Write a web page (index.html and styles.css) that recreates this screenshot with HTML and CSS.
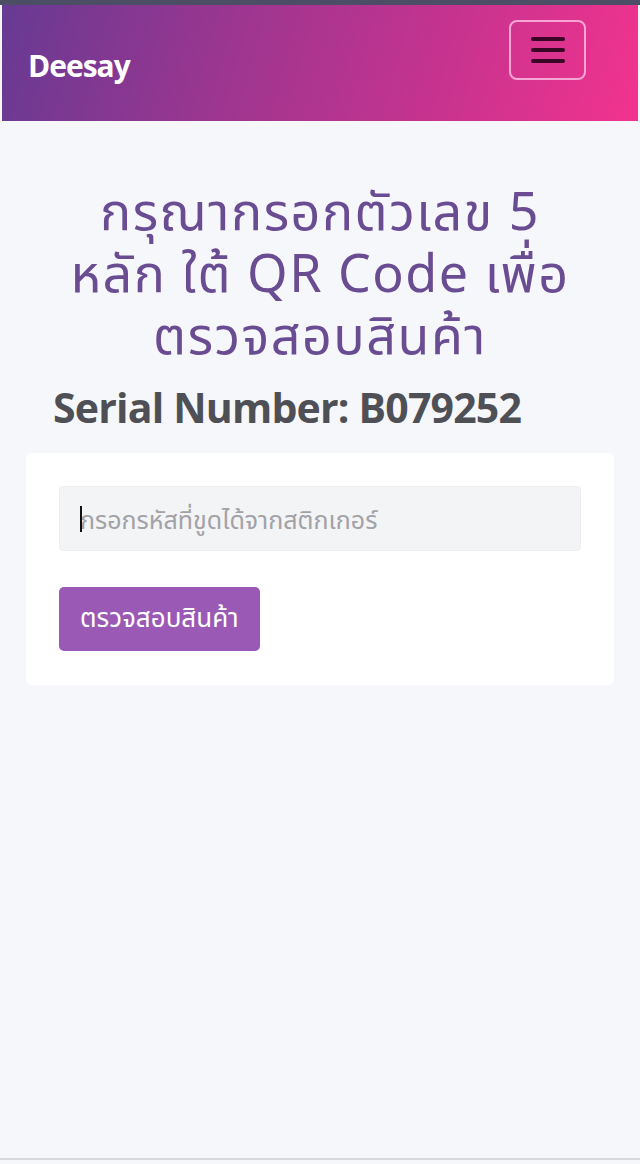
FILE: index.html
```html
<!DOCTYPE html>
<html lang="th">
<head>
<meta charset="utf-8">
<title>Deesay</title>
<link rel="stylesheet" href="styles.css">
</head>
<body>
<div class="topbar"></div>
<nav class="navbar">
  <a class="brand" href="#">Deesay</a>
  <button class="toggler" type="button" aria-label="menu">
    <span class="bar"></span><span class="bar"></span><span class="bar"></span>
  </button>
</nav>
<main class="content">
  <h1 class="title">กรุณากรอกตัวเลข 5<br>หลัก ใต้ QR Code เพื่อ<br>ตรวจสอบสินค้า</h1>
  <h2 class="serial">Serial Number: B079252</h2>
  <div class="card">
    <div class="field"><span class="caret"></span><input class="input" type="text" placeholder="กรอกรหัสที่ขูดได้จากสติกเกอร์"></div>
    <button class="btn" type="button">ตรวจสอบสินค้า</button>
  </div>
</main>
<div class="bottomline"></div>
</body>
</html>
```
FILE: styles.css
```css
html, body { margin: 0; padding: 0; }
body {
  background: #f6f7fb;
  font-family: "Noto Sans", "Noto Sans Thai", "Open Sans", sans-serif;
  width: 640px;
  height: 1164px;
  overflow: hidden;
  display: flex;
  flex-direction: column;
}
.topbar { height: 5px; background: #4b4e65; }
.navbar {
  margin: 0 2px;
  height: 116px;
  background: linear-gradient(105deg, #673a93 0%, #9b3690 35%, #c8338f 70%, #f2338e 100%);
  display: flex;
  align-items: center;
  justify-content: space-between;
  padding: 0 52px 0 26px;
  box-sizing: border-box;
}
.brand {
  color: #fff;
  font-family: "Open Sans", sans-serif;
  font-weight: 700;
  font-size: 30px;
  letter-spacing: -1px;
  text-decoration: none;
  margin-top: 4px;
}
.toggler {
  width: 77px;
  height: 60px;
  border: 2px solid #f6a6d4;
  border-radius: 8px;
  background: transparent;
  display: flex;
  flex-direction: column;
  align-items: center;
  justify-content: center;
  gap: 7px;
  padding: 0;
  margin-top: -26px;
}
.bar { display: block; width: 34px; height: 4px; border-radius: 2px; background: #3a0626; }
.content { flex: 1; padding: 0 26px; }
.title {
  margin: 58px 0 0;
  text-align: center;
  color: #6a4c93;
  font-weight: 400;
  font-size: 52px;
  letter-spacing: 1.5px;
  line-height: 62px;
}
.serial {
  margin: 17px 0 0 27px;
  color: #4e5056;
  font-family: "Open Sans", sans-serif;
  font-weight: 700;
  font-size: 41px;
  line-height: 50px;
  letter-spacing: -0.8px;
}
.card {
  margin-top: 21px;
  background: #fff;
  border-radius: 6px;
  padding: 33px 33px 34px;
}
.field { position: relative; }
.caret { position: absolute; left: 21px; top: 20px; width: 2px; height: 26px; background: #111; }
.input {
  display: block;
  width: 100%;
  box-sizing: border-box;
  height: 65px;
  background: #f3f4f6;
  border: 1px solid #eceef1;
  border-radius: 4px;
  padding: 0 20px;
  font-family: inherit;
  font-size: 25px;
  color: #333;
}
.input::placeholder { color: #a2a2a6; }
.btn {
  margin-top: 36px;
  height: 64px;
  padding: 0 21px;
  background: #9b59b6;
  color: #fff;
  border: none;
  border-radius: 5px;
  font-family: inherit;
  font-size: 26px;
}
.bottomline { height: 2px; background: #d8d9dc; margin-bottom: 4px; }
```
